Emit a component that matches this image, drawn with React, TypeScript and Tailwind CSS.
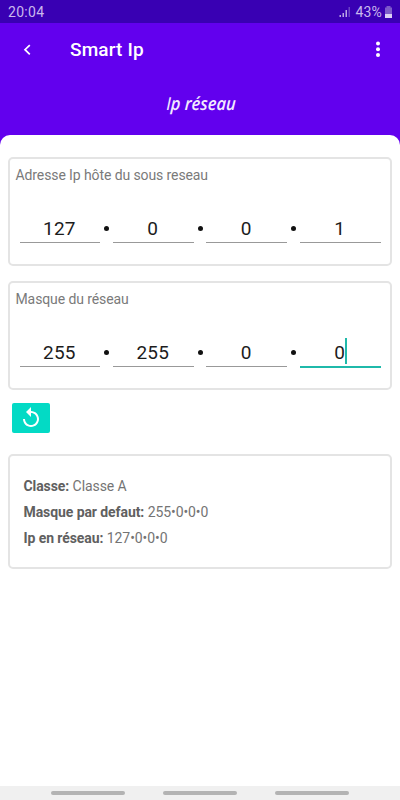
type AddressProps = { title: string; parts: string[]; active?: number };

function AddressCard({ title, parts, active }: AddressProps) {
  return (
    <section className="mx-2 h-[109px] rounded-[5px] border-2 border-[#e4e4e4] pt-[6px]">
      <h2 className="pl-[5.5px] text-[14px] leading-5 tracking-[-0.1px] text-[#7a7a7a]">{title}</h2>
      <div className="mt-[27px] flex pl-[9.5px] pr-[9.5px]">
        {parts.map((part, i) => (
          <div key={i} className="contents">
            {i > 0 && (
              <div className="flex h-[31px] w-[12.7px] shrink-0 justify-center pt-[14px]">
                <span className="size-[5px] rounded-full bg-[#111111]" />
              </div>
            )}
            <div
              className={
                i === active
                  ? "flex h-[32px] flex-1 justify-center border-b-2 border-[#1fb9aa]"
                  : "flex h-[31px] flex-1 justify-center border-b border-[#999999]"
              }
            >
              <span className="relative -left-[0.5px] text-[19px] leading-[33px] tracking-[0.2px] text-[#1c1c1c]">
                {part}
                {i === active && <span className="absolute left-full top-[2px] h-[26px] w-[2px] bg-[#1fb9aa]" />}
              </span>
            </div>
          </div>
        ))}
      </div>
    </section>
  );
}

const results = [
  ["Classe:", "Classe A"],
  ["Masque par defaut:", "255•0•0•0"],
  ["Ip en réseau:", "127•0•0•0"],
];

export default function App() {
  return (
    <div className="flex h-[800px] w-[400px] flex-col overflow-hidden bg-[#6200ee] font-[Roboto,sans-serif]">
      <div className="flex h-[23px] shrink-0 items-center bg-[#3900b3] pl-2 pr-[7px] pt-px text-[14px] text-[#c9b8ee]">
        <span className="tracking-[0.3px]">20:04</span>
        <svg className="ml-auto mr-[4px]" width="12" height="12" viewBox="0 0 12 12" fill="#b9a5e5">
          <rect x="0.5" y="9" width="1.5" height="2" />
          <rect x="3.5" y="7" width="1.5" height="4" />
          <rect x="6.5" y="4" width="1.5" height="7" />
          <rect x="9.5" y="1" width="1.5" height="10" opacity="0.4" />
        </svg>
        <span className="tracking-[0.2px]">43%</span>
        <svg className="ml-[2px]" width="9" height="13" viewBox="0 0 9 13">
          <path d="M2.5 0h4v1.5H8V8H1V1.5h1.5z" fill="#7d5bca" />
          <path d="M1 8h7v4H1z" fill="#ddd0f5" />
        </svg>
      </div>

      <header className="flex h-[53px] shrink-0 items-center text-white">
        <svg className="ml-[22px]" width="10" height="14" viewBox="0 0 10 14" fill="none" stroke="currentColor" strokeWidth="1.7">
          <path d="M7.8 2.1L3 6.7l4.8 4.6" />
        </svg>
        <h1 className="ml-[38px] text-[19px] font-medium leading-6 tracking-[0.15px]">Smart Ip</h1>
        <svg className="ml-auto mr-[19px]" width="6" height="18" viewBox="0 0 6 18" fill="currentColor">
          <circle cx="3" cy="2.6" r="2" />
          <circle cx="3" cy="8.3" r="2" />
          <circle cx="3" cy="14" r="2" />
        </svg>
      </header>

      <div className="flex h-[59px] shrink-0 justify-center pl-px pt-[14px]">
        <p className="-skew-x-3 scale-x-[0.92] whitespace-nowrap font-['Open_Sans',sans-serif] text-[18px] font-semibold italic leading-[26px] text-[#f3eaff]">
          <span className="font-[Roboto,sans-serif] font-normal">I</span>p réseau
        </p>
      </div>

      <main className="flex min-h-0 flex-1 flex-col rounded-t-[10px] bg-white pt-[22px]">
        <AddressCard title="Adresse Ip hôte du sous reseau" parts={["127", "0", "0", "1"]} />
        <div className="h-[15px]" />
        <AddressCard title="Masque du réseau" parts={["255", "255", "0", "0"]} active={3} />

        <button className="ml-3 mt-[13px] flex h-[30px] w-[38px] items-center justify-center rounded-[2px] bg-[#03dac5] text-white">
          <svg width="24" height="24" viewBox="0 0 24 24" fill="currentColor">
            <path d="M12 5V1L7 6l5 5V7c3.31 0 6 2.69 6 6s-2.69 6-6 6-6-2.69-6-6H4c0 4.42 3.58 8 8 8s8-3.58 8-8-3.58-8-8-8z" />
          </svg>
        </button>

        <section className="mx-2 mt-[21px] h-[115px] rounded-[5px] border-2 border-[#e4e4e4] pl-[13.5px] pt-[17px] text-[14px] leading-[26px] tracking-[-0.08px] text-[#747474]">
          {results.map(([label, value]) => (
            <p key={label}>
              <b className="font-bold text-[#606060]">{label}</b> {value}
            </p>
          ))}
        </section>
      </main>

      <nav className="flex h-[14px] shrink-0 justify-center gap-[37.5px] bg-[#f0f0f0] pr-[0.5px] pt-[5px]">
        <span className="h-1 w-[74.5px] rounded-full bg-[#b3b3b3]" />
        <span className="h-1 w-[74.5px] rounded-full bg-[#b3b3b3]" />
        <span className="h-1 w-[74.5px] rounded-full bg-[#b3b3b3]" />
      </nav>
    </div>
  );
}
